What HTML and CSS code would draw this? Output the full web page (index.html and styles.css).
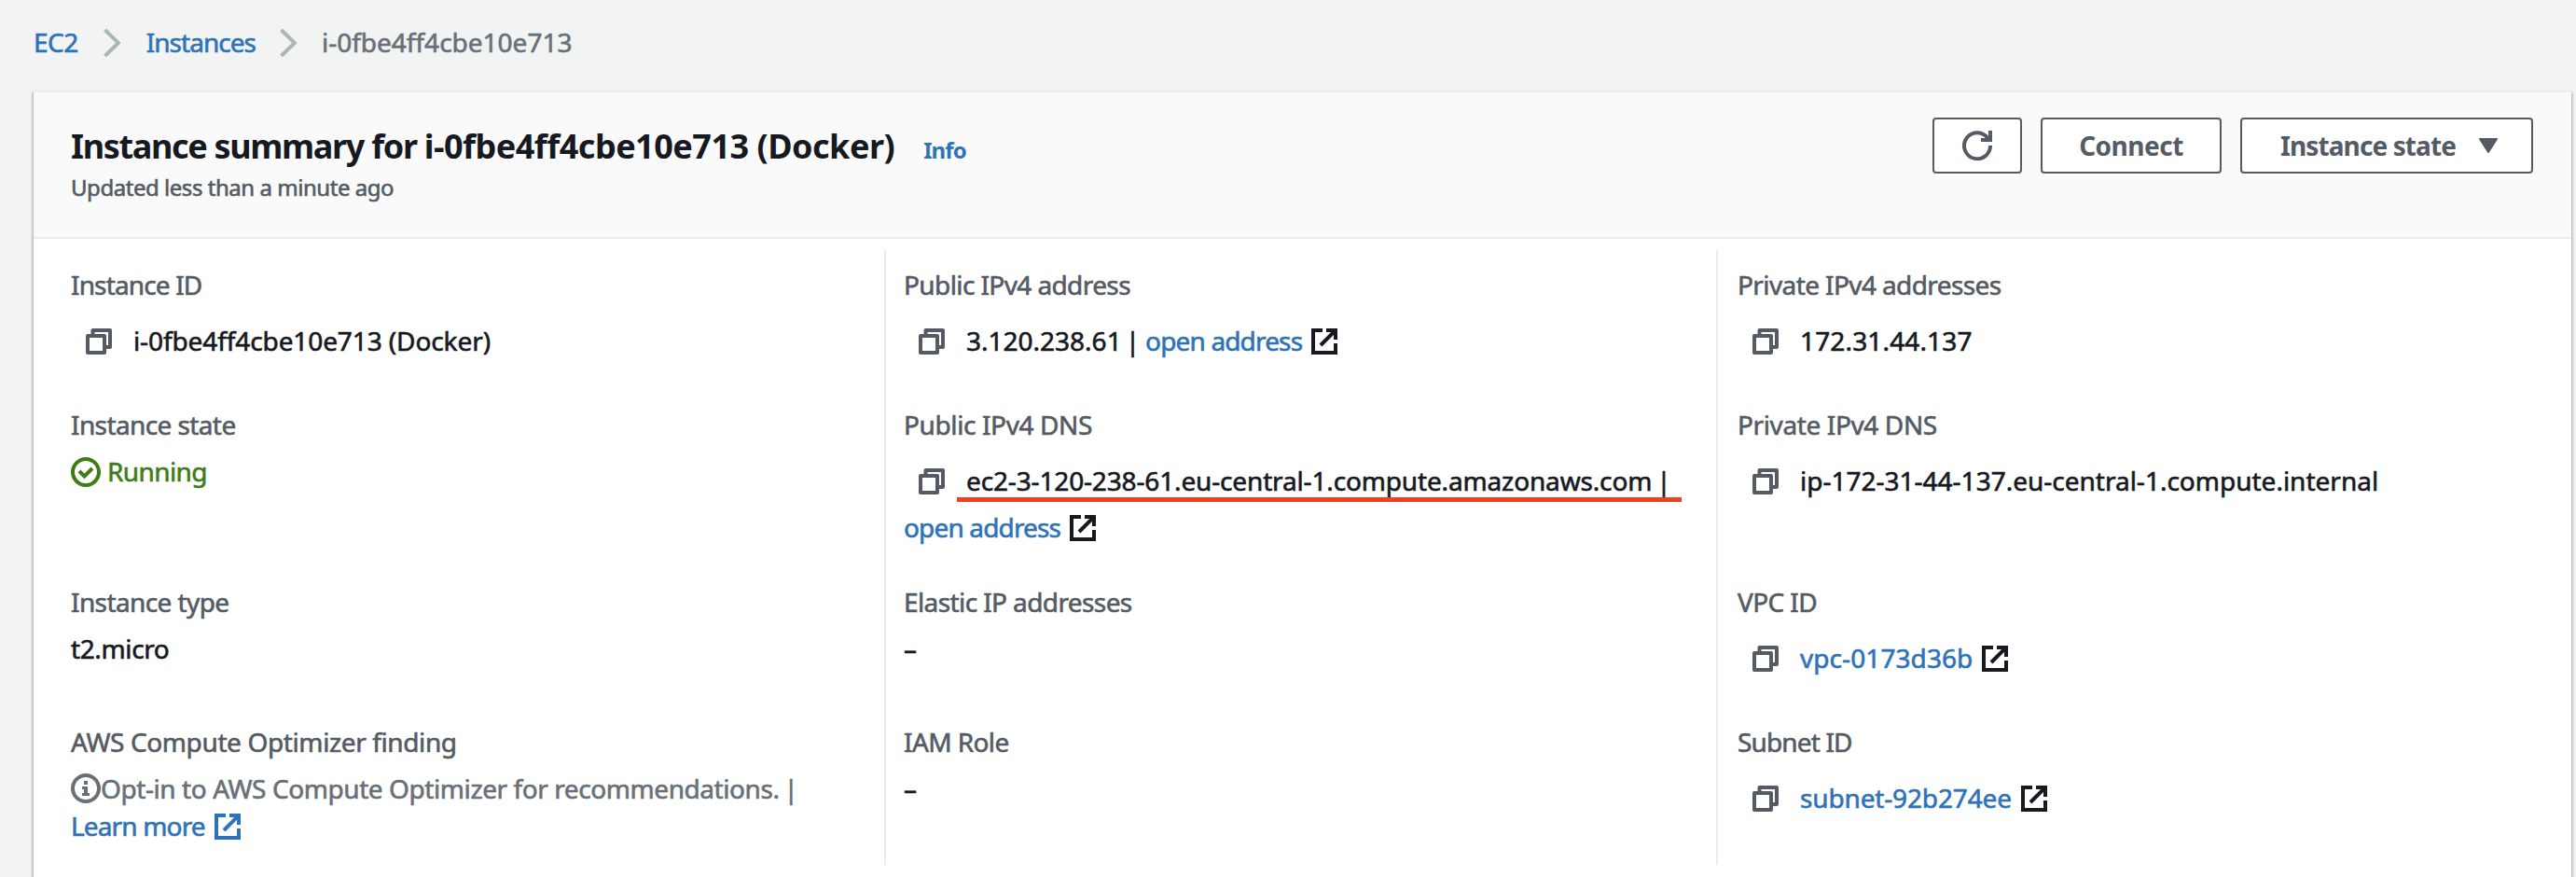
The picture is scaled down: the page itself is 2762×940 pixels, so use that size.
FILE: index.html
```html
<!DOCTYPE html>
<html lang="en">
<head>
<meta charset="utf-8">
<title>Instance summary</title>
<link rel="stylesheet" href="styles.css">
</head>
<body>
<svg class="defs" aria-hidden="true">
  <symbol id="copy" viewBox="0 0 28 28"><path d="M7.500 8V2H26V20H20M2 8H20V26H2Z" fill="none" stroke="currentColor" stroke-width="4" stroke-linejoin="round"/></symbol>
  <symbol id="external" viewBox="0 0 28 28"><path d="M12 2H2V26H26V16M16 2H26V12M25 3L10 18" fill="none" stroke="currentColor" stroke-width="4"/></symbol>
  <symbol id="chevron" viewBox="0 0 18 30"><path d="M1.500 1L16 15L1.500 29" fill="none" stroke="currentColor" stroke-width="4"/></symbol>
</svg>
<nav class="breadcrumbs">
  <a class="link" href="#">EC2</a>
  <svg class="chevron"><use href="#chevron"/></svg>
  <a class="link instances" href="#">Instances</a>
  <svg class="chevron"><use href="#chevron"/></svg>
  <span class="current">i-0fbe4ff4cbe10e713</span>
</nav>
<main class="panel">
  <header class="header">
    <div class="heading">
      <div class="title-row"><h1 class="title">Instance summary for <span class="title-id">i-0fbe4ff4cbe10e713 (Docker)</span></h1><a class="info" href="#">Info</a></div>
      <p class="updated">Updated less than a minute ago</p>
    </div>
    <div class="actions">
      <button class="button refresh" aria-label="Refresh"><svg viewBox="0 0 32 32"><path d="M30 16A14 14 0 1 1 25 5.500L28 9" fill="none" stroke="currentColor" stroke-width="4"/><path d="M28 0H32V12H20V8H28Z" fill="currentColor"/></svg></button>
      <button class="button connect">Connect</button>
      <button class="button state"><span>Instance state</span><svg viewBox="0 0 20 16"><path d="M1 1H19L10 15Z" fill="currentColor" stroke="currentColor" stroke-width="2" stroke-linejoin="round"/></svg></button>
    </div>
  </header>
  <section class="columns">
    <div class="column">
      <div class="field"><div class="label tight-3">Instance ID</div><div class="value copyable"><svg class="icon copy"><use href="#copy"/></svg><span class="instance">i-0fbe4ff4cbe10e713 (Docker)</span></div></div>
      <div class="field tall"><div class="label tight-2">Instance state</div><div class="value status"><svg class="status-icon" viewBox="0 0 32 32"><circle cx="16" cy="16" r="14" fill="none" stroke="currentColor" stroke-width="4"/><path d="M9 15L14.500 20.500L23 12" fill="none" stroke="currentColor" stroke-width="4"/></svg><span class="tight-2">Running</span></div></div>
      <div class="field"><div class="label tight-2">Instance type</div><div class="value tight-1">t2.micro</div></div>
      <div class="field"><div class="label tight-1">AWS Compute Optimizer finding</div><div class="value finding"><svg class="info-icon" viewBox="0 0 32 32"><circle cx="16" cy="16" r="14" fill="none" stroke="currentColor" stroke-width="4"/><path d="M14 8H18V12H14ZM12 14H18V21H20V24H12V21H14V17H12Z" fill="currentColor"/></svg><span>Opt-in to AWS Compute Optimizer for recommendations.<span class="bar">|</span></span></div><div class="value learn link"><span class="tight-3">Learn more</span><svg class="icon ext"><use href="#external"/></svg></div></div>
    </div>
    <div class="column">
      <div class="field"><div class="label tight-2">Public IPv4 address</div><div class="value copyable"><svg class="icon copy"><use href="#copy"/></svg><span class="address">3.120.238.61<span class="bar">|</span></span><a class="link after tight-3" href="#">open address</a><svg class="icon ext"><use href="#external"/></svg></div></div>
      <div class="field tall"><div class="label tight-1">Public IPv4 DNS</div><div class="value copyable"><svg class="icon copy"><use href="#copy"/></svg><span class="marked">ec2-3-120-238-61.eu-central-1.compute.amazonaws.com<span class="bar">|</span></span></div><div class="value second"><a class="link tight-3" href="#">open address</a><svg class="icon ext"><use href="#external"/></svg></div></div>
      <div class="field"><div class="label tight-2">Elastic IP addresses</div><div class="value">–</div></div>
      <div class="field"><div class="label tight-2">IAM Role</div><div class="value">–</div></div>
    </div>
    <div class="column">
      <div class="field"><div class="label tight-2">Private IPv4 addresses</div><div class="value copyable"><svg class="icon copy"><use href="#copy"/></svg><span class="private-ip">172.31.44.137</span></div></div>
      <div class="field tall"><div class="label tight-1">Private IPv4 DNS</div><div class="value copyable"><svg class="icon copy"><use href="#copy"/></svg><span>ip-172-31-44-137.eu-central-1.compute.internal</span></div></div>
      <div class="field"><div class="label tight-2">VPC ID</div><div class="value copyable"><svg class="icon copy"><use href="#copy"/></svg><a class="link vpc" href="#">vpc-0173d36b</a><svg class="icon ext"><use href="#external"/></svg></div></div>
      <div class="field"><div class="label tight-3">Subnet ID</div><div class="value copyable"><svg class="icon copy"><use href="#copy"/></svg><a class="link subnet" href="#">subnet-92b274ee</a><svg class="icon ext"><use href="#external"/></svg></div></div>
    </div>
  </section>
</main>
</body>
</html>
```
FILE: styles.css
```css
* { box-sizing: border-box; }
body { margin: 0; height: 940px; overflow: hidden; background: #f2f3f3; color: #16191f; font: 28px/40px "Noto Sans", "Open Sans", sans-serif; -webkit-text-stroke: 0.6px currentColor; display: flex; flex-direction: column; white-space: nowrap; }
.defs { display: none; }
.link { color: #2e73b8; text-decoration: none; }
.tight-1 { letter-spacing: -0.38px; }
.tight-2 { letter-spacing: -0.6px; }
.tight-3 { letter-spacing: -0.85px; }
.breadcrumbs { height: 97px; padding: 25px 0 0 36px; display: flex; align-items: flex-start; color: #687078; }
.breadcrumbs .link:first-child { letter-spacing: -0.5px; }
.breadcrumbs .instances { letter-spacing: -0.98px; }
.chevron { width: 18px; height: 30px; margin: 6px 28px 0 27px; color: #aab7b8; }
.breadcrumbs .instances + .chevron { margin-left: 26px; margin-right: 27px; }
.panel { flex: 1; margin: 0 5px 0 36px; background: #fff; border-top: 2px solid #eaeded; box-shadow: 0 2px 2px rgba(0,28,36,.3), 2px 2px 2px rgba(0,28,36,.15), -2px 2px 2px rgba(0,28,36,.15); }
.header { height: 157px; background: #fafafa; border-bottom: 2px solid #eaeded; display: flex; justify-content: space-between; padding: 27px 41px 0 40px; }
.title-row { display: flex; align-items: baseline; margin-top: 9px; height: 44px; }
.title { margin: 0; font-size: 36px; line-height: 44px; letter-spacing: -1.33px; }
.title-id { letter-spacing: -0.5px; }
.title, .info, .button { -webkit-text-stroke: 0; }
.info { font-size: 24px; font-weight: 700; color: #2e73b8; text-decoration: none; margin-left: 31px; letter-spacing: -0.9px; }
.updated { margin: 6px 0 0; font-size: 24px; line-height: 32px; color: #545b64; letter-spacing: -0.46px; }
.actions { display: flex; gap: 20px; }
.button { height: 60px; border: 2px solid #545b64; border-radius: 4px; background: #fff; color: #545b64; font: 700 28px/40px "Noto Sans", sans-serif; display: flex; align-items: center; justify-content: center; padding: 0; }
.refresh { width: 96px; }
.refresh svg { width: 32px; height: 32px; }
.connect { width: 194px; letter-spacing: -0.5px; }
.state { width: 314px; gap: 25px; padding-left: 5px; letter-spacing: -0.9px; }
.state svg { width: 20px; height: 16px; }
.columns { display: grid; grid-template-columns: 912px 892px 1fr; padding-top: 12px; height: 670px; }
.column { padding: 17px 0 0 40px; height: 659px; }
.column + .column { border-left: 2px solid #eaeded; padding-left: 19px; }
.column:last-child { padding-left: 21px; }
.field { height: 150px; }
.tall { height: 190px; }
.label { color: #545b64; height: 40px; }
.value { height: 40px; margin-top: 10px; display: flex; align-items: center; }
.copyable { margin-top: 20px; padding-left: 16px; }
.icon { width: 28px; height: 28px; flex: none; margin-top: 2px; }
.copy { color: #545b64; margin-right: 23px; }
.ext { margin-left: 10px; }
.after { margin-left: 6px; }
.second { margin-top: 10px; }
.bar { margin-left: 5px; }
.instance { letter-spacing: -0.1px; }
.address .bar { margin-left: 4px; }
.private-ip { letter-spacing: 0.15px; }
.status { color: #3c7d16; }
.status-icon { width: 32px; height: 32px; margin-right: 7px; margin-top: 1px; }
.info-icon { width: 32px; height: 32px; }
.finding { color: #687078; letter-spacing: -0.42px; }
.learn { margin-top: 0; }
.vpc { letter-spacing: 0.08px; }
.subnet { letter-spacing: -0.15px; }
.marked { position: relative; letter-spacing: -0.15px; }
.marked::after { content: ""; position: absolute; left: -10px; right: -11px; top: 38px; height: 5px; background: #ef4023; }
```
